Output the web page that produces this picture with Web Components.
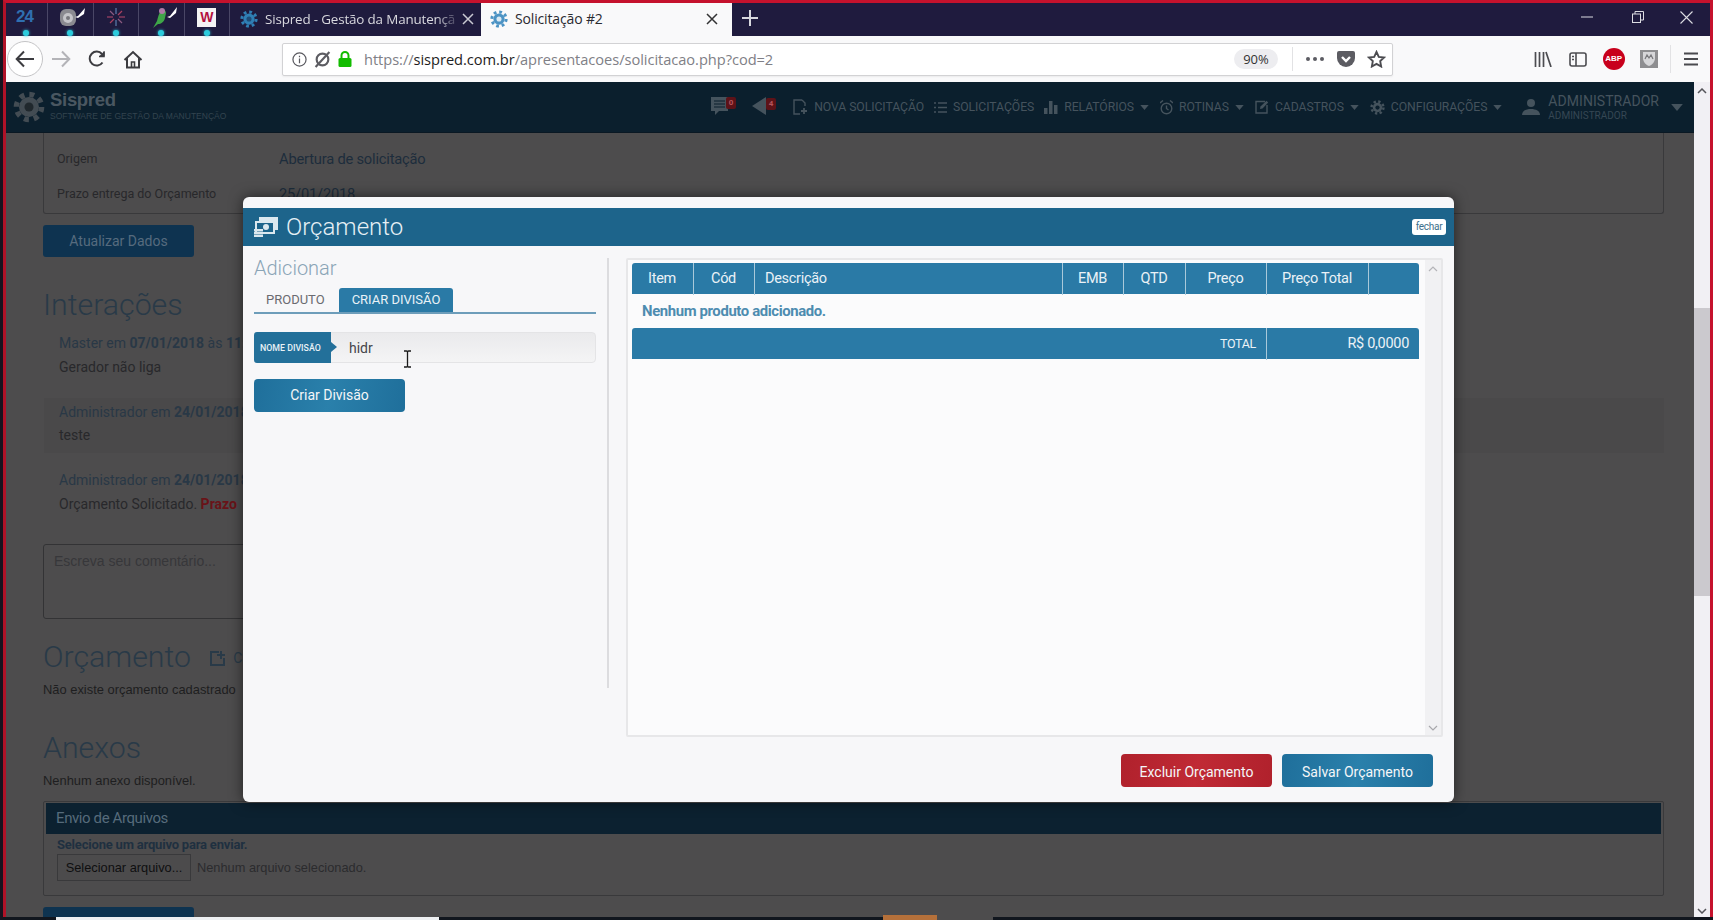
<!DOCTYPE html>
<html lang="pt-BR">
<head>
<meta charset="utf-8">
<title>Solicitação #2</title>
<style>
  html, body { margin: 0; height: 100%; overflow: hidden; background: #17131f; }
  body { font-family: Roboto, "Liberation Sans", sans-serif; }
</style>
</head>
<body>
<browser-window>
  <tab-bar></tab-bar>
  <tool-bar></tool-bar>
  <page-view>
    <app-header></app-header>
    <page-content></page-content>
  </page-view>
</browser-window>
<budget-modal></budget-modal>

<script>
// small svg helpers, the same gear is used in the tabs, the logo and the menu
function gear(size, color, hole) {
  return `<svg width="${size}" height="${size}" viewBox="0 0 24 24">
    <circle cx="12" cy="12" r="9.5" fill="none" stroke="${color}" stroke-width="4" stroke-dasharray="3.7 3.76"/>
    <circle cx="12" cy="12" r="7.5" fill="${color}"/>
    <circle cx="12" cy="12" r="3.4" fill="${hole}"/>
  </svg>`;
}
function caret(w, color) {
  return `<svg width="${w}" height="${Math.round(w * 0.6)}" viewBox="0 0 10 6"><path d="M0 0h10L5 6z" fill="${color}"/></svg>`;
}

class BrowserWindow extends HTMLElement {
  constructor() {
    super();
    this.attachShadow({ mode: 'open' });
    this.shadowRoot.innerHTML = `
      <style>
        :host { display: flex; flex-direction: column; box-sizing: border-box; width: 1713px; height: 920px; padding-left: 3px; }
        .frame { flex: 1; min-height: 0; display: flex; flex-direction: column; border-top: 3px solid #c5122d; border-left: 3px solid #b01228; border-right: 3px solid #c5122d; }
        .strip { height: 3px; display: flex; background: #11161e; }
        .strip i { display: block; height: 3px; }
        .white { margin-left: 53px; width: 383px; background: #eef0f2; }
        .orange { margin-left: 444px; width: 54px; background: #b5703a; height: 5px !important; margin-top: -2px; }
        .grey { width: 56px; background: #4d4c4d; }
      </style>
      <div class="frame"><slot></slot></div>
      <div class="strip"><i class="white"></i><i class="orange"></i><i class="grey"></i></div>`;
  }
}

class TabBar extends HTMLElement {
  constructor() {
    super();
    this.attachShadow({ mode: 'open' });
    this.shadowRoot.innerHTML = `
      <style>
        :host { display: flex; height: 33px; background: #1f1b3e; color: #d8d8de; font: 14px "Open Sans", "Liberation Sans", sans-serif; flex: none; }
        .pin { box-sizing: border-box; width: 45.5px; border-right: 1px solid #4a4766; display: flex; align-items: center; justify-content: center; position: relative; padding-bottom: 5px; }
        .pin.first { width: 42px; padding-right: 4px; }
        .pin::after { content: ""; position: absolute; bottom: 0; left: 50%; margin-left: -3px; width: 6px; height: 6px; border-radius: 50%; background: #2bcbdc; box-shadow: 0 0 3px #2bcbdc; }
        .pin.first::after { margin-left: -4px; }
        .n24 { font: bold 17px "Liberation Sans", sans-serif; color: #2f6fb0; letter-spacing: -1px; }
        .w { display: block; width: 19px; height: 19px; background: #f4f4f4; color: #b3123f; font: bold 14px/19px "Liberation Sans", sans-serif; text-align: center; }
        .tab { box-sizing: border-box; width: 251px; display: flex; align-items: center; padding: 0 13px 2px 10px; gap: 7px; white-space: nowrap; }
        .tab .t { flex: 1; font-size: 13.4px; letter-spacing: -.15px;
          -webkit-mask-image: linear-gradient(90deg, #000 90%, rgba(0,0,0,.25)); mask-image: linear-gradient(90deg, #000 90%, rgba(0,0,0,.25)); }
        .tab svg { flex: none; }
        .tab.on { background: #f9f9fa; color: #2a2a30; padding: 0 14px 2px 9px; }
        .tab.on .t { font-size: 14px; -webkit-mask-image: none; mask-image: none; }
        .plus { width: 36px; display: flex; align-items: center; justify-content: center; padding-bottom: 4px; }
        .win { margin-left: auto; display: flex; align-items: center; padding-bottom: 5px; }
        .win span { width: 51px; display: flex; justify-content: center; }
        .win span:last-child { width: 47px; }
      </style>
      <div class="pin first"><span class="n24">24</span></div>
      <div class="pin">
        <svg style="margin-left:5px" width="28" height="22" viewBox="0 0 28 22"><rect x="1" y="3" width="16" height="17" rx="6" fill="#8a8a90"/><circle cx="9" cy="12" r="5" fill="#c4c4c8"/><circle cx="9" cy="12" r="2" fill="#77777c"/><path d="M16 11l3-1 7-8-1 6-6 4z" fill="#fff"/></svg>
      </div>
      <div class="pin">
        <svg width="20" height="20" viewBox="0 0 20 20" stroke-width="1.2"><path d="M10 1v6M10 13v6" stroke="#5c7fae"/><path d="M1 10h6M13 10h6" stroke="#b94a6c"/><path d="M4 4l4 4M12 12l4 4" stroke="#8a5a80"/><path d="M16 4l-4 4M8 12l-4 4" stroke="#a9405f"/></svg>
      </div>
      <div class="pin">
        <svg style="margin-left:5px" width="28" height="24" viewBox="0 0 28 24"><path d="M3 23l4-7c1-4 2-8 4-10 2-2 5-1 5 2l-1 5c-1 4-4 6-7 6z" fill="#3fa648"/><circle cx="12" cy="6" r="3" fill="#b07aa8"/><path d="M17 12l3-1 7-9-1 6-6 5z" fill="#fff"/></svg>
      </div>
      <div class="pin"><span class="w">W</span></div>
      <div class="tab">${gear(18, '#2f7fb5', '#1f4d78')}<span class="t">Sispred - Gestão da Manutençã</span>
        <svg width="12" height="12" viewBox="0 0 12 12"><path d="M1 1l10 10M11 1L1 11" stroke="#c9c9d2" stroke-width="1.5"/></svg></div>
      <div class="tab on">${gear(18, '#4c93c4', '#d9e8f2')}<span class="t">Solicitação #2</span>
        <svg width="12" height="12" viewBox="0 0 12 12"><path d="M1 1l10 10M11 1L1 11" stroke="#333" stroke-width="1.5"/></svg></div>
      <div class="plus"><svg width="16" height="16" viewBox="0 0 16 16"><path d="M8 0v16M0 8h16" stroke="#d8d8de" stroke-width="2"/></svg></div>
      <div class="win">
        <span><svg width="12" height="2"><path d="M0 1h12" stroke="#dcdce2"/></svg></span>
        <span><svg width="12" height="12" viewBox="0 0 12 12" fill="none" stroke="#dcdce2"><rect x=".5" y="3" width="8" height="8.5"/><path d="M3 3V.5h8.5V9H9"/></svg></span>
        <span><svg width="13" height="13" viewBox="0 0 13 13"><path d="M.5.5l12 12M12.5.5l-12 12" stroke="#dcdce2" stroke-width="1.1"/></svg></span>
      </div>`;
  }
}

class ToolBar extends HTMLElement {
  constructor() {
    super();
    this.attachShadow({ mode: 'open' });
    this.shadowRoot.innerHTML = `
      <style>
        :host { display: flex; align-items: center; height: 46px; background: #f9f9fa; flex: none; box-sizing: border-box; font: 15px "Open Sans", "Liberation Sans", sans-serif; }
        .btn { width: 36px; height: 36px; display: flex; align-items: center; justify-content: center; flex: none; }
        .back { box-sizing: border-box; margin-left: 1px; border: 1px solid #c4c4c6; border-radius: 50%; background: #fff; }
        .url { box-sizing: border-box; margin-left: 131px; width: 1111px; height: 33px; background: #fff; border: 1px solid #d2d2d4; border-radius: 2px; display: flex; align-items: center; padding-left: 9px; box-shadow: 0 1px 2px rgba(0,0,0,.06); }
        .addr { margin-left: 12px; color: #808086; white-space: nowrap; font-size: 14.65px; letter-spacing: -.05px; }
        .addr b { font-weight: 400; color: #1d1d22; }
        .zoom { margin-left: auto; box-sizing: border-box; width: 44px; height: 20px; border-radius: 10px; background: #ededf0; color: #333; font-size: 13px; line-height: 20px; text-align: center; }
        .sep { width: 1px; height: 24px; background: #e2e2e4; margin: 0 6px 0 14px; }
        .ico { width: 31px; display: flex; justify-content: center; }
        .right { margin-left: 132px; display: flex; align-items: center; }
        .right .ico { width: 35.5px; }
        .abp { width: 22px; height: 22px; border-radius: 50%; background: #c8001c; color: #fff; font: bold 8px/22px "Liberation Sans", sans-serif; text-align: center; }
      </style>
      <div class="btn back"><svg width="20" height="18" viewBox="0 0 20 18" fill="none" stroke="#3c3c40" stroke-width="2"><path d="M19 9H2M9 1.5L1.7 9 9 16.5"/></svg></div>
      <div class="btn"><svg width="20" height="18" viewBox="0 0 20 18" fill="none" stroke="#b4b4b8" stroke-width="2"><path d="M1 9h17M11 1.5L18.3 9 11 16.5"/></svg></div>
      <div class="btn"><svg width="18" height="18" viewBox="0 0 18 18" fill="none" stroke="#3c3c40" stroke-width="2"><path d="M14.5 12.5A7 7 0 1 1 14 4"/><path d="M16.5 1v5h-5" stroke="none" fill="#3c3c40"/><path d="M16 1.5V6.5H11" stroke-width="1.6"/></svg></div>
      <div class="btn"><svg width="20" height="19" viewBox="0 0 20 19" fill="none" stroke="#3c3c40" stroke-width="2"><path d="M1.5 10L10 2l8.5 8M4 8v9.5h12V8"/><path d="M8.5 17.5V12h3v5.5" stroke-width="1.6"/></svg></div>
      <div class="url">
        <svg width="15" height="15" viewBox="0 0 16 16" fill="none" stroke="#5a5a60" stroke-width="1.3"><circle cx="8" cy="8" r="7"/><path d="M8 7v5M8 4v1.6"/></svg>
        <svg style="margin-left:7px" width="17" height="17" viewBox="0 0 16 16" fill="none" stroke="#5c5c62" stroke-width="2"><circle cx="8" cy="8" r="5.5"/><path d="M14.5 1L1.5 15" stroke-width="2"/></svg>
        <svg style="margin-left:7px" width="14" height="16" viewBox="0 0 14 16"><path d="M3.5 7V4.5a3.5 3.5 0 0 1 7 0V7" fill="none" stroke="#12bc00" stroke-width="2"/><rect x="0.5" y="7" width="13" height="9" rx="1.5" fill="#12bc00"/></svg>
        <span class="addr">https://<b>sispred.com.br</b>/apresentacoes/solicitacao.php?cod=2</span>
        <span class="zoom">90%</span>
        <span class="sep"></span>
        <span class="ico"><svg width="18" height="4" viewBox="0 0 18 4" fill="#5c5c62"><circle cx="2" cy="2" r="2"/><circle cx="9" cy="2" r="2"/><circle cx="16" cy="2" r="2"/></svg></span>
        <span class="ico"><svg width="18" height="16" viewBox="0 0 18 16"><path d="M2 0h14a2 2 0 0 1 2 2v5a9 9 0 0 1-18 0V2a2 2 0 0 1 2-2z" fill="#5c5c62"/><path d="M5 6l4 4 4-4" fill="none" stroke="#fff" stroke-width="2.4"/></svg></span>
        <span class="ico"><svg width="19" height="18" viewBox="0 0 20 19" fill="none" stroke="#4c4c50" stroke-width="2"><path d="M10 2l2.4 5.2 5.6.7-4.1 3.9 1 5.600-4.900-2.800-4.900 2.800 1-5.600L2 7.900l5.600-.7z"/></svg></span>
      </div>
      <div class="right">
        <span class="ico"><svg width="18" height="16" viewBox="0 0 18 16" fill="none" stroke="#4c4c50" stroke-width="1.7"><path d="M1.5 1v15M5.5 1v15M9.5 1v15M12 1l5 15"/></svg></span>
        <span class="ico"><svg width="18" height="15" viewBox="0 0 18 15" fill="none" stroke="#4c4c50" stroke-width="1.6"><rect x="1" y="1" width="16" height="13" rx="2"/><path d="M7 1v13"/><path d="M3 4.5h2M3 7.5h2" stroke-width="1.4"/></svg></span>
        <span class="ico"><span class="abp">ABP</span></span>
        <span class="ico"><svg width="18" height="18" viewBox="0 0 18 18"><rect width="18" height="18" fill="#8e8e90"/><path d="M3 2h12v6c0 4-3 7-6 8-3-1-6-4-6-8z" fill="#d6d6d8"/><path d="M5 9l2-4 2 3 2-3 2 4" fill="none" stroke="#77777a" stroke-width="1.2"/></svg></span>
        <span class="sep" style="margin:0 0 0 3px;height:28px"></span>
        <span class="ico" style="margin-left:3px"><svg width="16" height="14" viewBox="0 0 16 14"><path d="M0 1.5h14M0 7h14M0 12.5h14" stroke="#4a4a4e" stroke-width="2"/></svg></span>
      </div>`;
  }
}

class PageView extends HTMLElement {
  constructor() {
    super();
    this.attachShadow({ mode: 'open' });
    this.shadowRoot.innerHTML = `
      <style>
        :host { display: flex; flex: 1; min-height: 0; }
        .main { flex: 1; min-width: 0; overflow: hidden; background: #4d4c4d; display: flex; flex-direction: column; }
        .bar { width: 16px; flex: none; background: #f1f0f4; display: flex; flex-direction: column; align-items: center; justify-content: space-between; padding: 6px 0 3px; box-sizing: border-box; position: relative; }
        .thumb { position: absolute; left: 0; right: 0; top: 226px; height: 288px; background: #cbc9ce; }
      </style>
      <div class="main"><slot></slot></div>
      <div class="bar">
        <svg width="10" height="6" viewBox="0 0 10 6"><path d="M1 5l4-4 4 4" fill="none" stroke="#55555a" stroke-width="1.5"/></svg>
        <div class="thumb"></div>
        <svg width="10" height="6" viewBox="0 0 10 6"><path d="M1 1l4 4 4-4" fill="none" stroke="#55555a" stroke-width="1.5"/></svg>
      </div>`;
  }
}

class AppHeader extends HTMLElement {
  constructor() {
    super();
    this.attachShadow({ mode: 'open' });
    const c = '#45535d';
    const item = (icon, text, drop, gap) => `<span class="item" style="margin-left:${gap}px">${icon}<span>${text}</span>${drop ? caret(9, c) : ''}</span>`;
    this.shadowRoot.innerHTML = `
      <style>
        :host { display: flex; align-items: center; flex: none; height: 51px; box-sizing: border-box; background: #0b1f2d; border-bottom: 1px solid #0a1823; padding: 0 11px 0 7px; color: ${c}; font: 12.2px Roboto, sans-serif; }
        .logo { display: flex; align-items: center; gap: 5px; }
        .name { font: bold 18.5px/19px "Liberation Sans", sans-serif; color: #4a5761; letter-spacing: -.3px; margin-top: -3px; }
        .tag { font: 8.5px/10px "Liberation Sans", sans-serif; color: #33444f; margin-top: 2px; white-space: nowrap; }
        nav { margin-left: auto; display: flex; align-items: center; }
        .item { display: flex; align-items: center; gap: 6px; white-space: nowrap; letter-spacing: -.05px; }
        .badge { position: relative; display: block; }
        .n { position: absolute; right: -2px; top: 3px; width: 10px; height: 12px; background: #5d1218; border-radius: 2px; color: #b4545c; font: bold 8px/12px Roboto, sans-serif; font-style: normal; text-align: center; }
        .who { margin-left: 8px; line-height: 1; }
        .who b { display: block; font-weight: 400; font-size: 14px; letter-spacing: .05px; }
        .who small { display: block; font-size: 10px; margin-top: 3px; color: #364754; }
      </style>
      <div class="logo">
        ${gear(32, '#434c53', '#20282d')}
        <div><div class="name">Sispred</div><div class="tag">SOFTWARE DE GESTÃO DA MANUTENÇÃO</div></div>
      </div>
      <nav>
        <span class="badge"><svg width="24" height="24" viewBox="0 0 24 24"><path d="M1 3h17v14H9l-4 4v-4H1z" fill="${c}"/><path d="M4 7h11M4 10h11M4 13h11" stroke="#0b1f2d"/></svg><i class="n">0</i></span>
        <span class="badge" style="margin-left:18px"><svg width="24" height="22" viewBox="0 0 24 22"><path d="M0 11L14 2v18z" fill="${c}"/></svg><i class="n" style="right:0">4</i></span>
        ${item(`<svg width="15" height="16" viewBox="0 0 15 16" fill="none" stroke="${c}" stroke-width="1.4"><path d="M9 1H1v14h6"/><path d="M9 1l3 3v3"/><path d="M11 9v6M8 12h6" stroke-width="1.8"/></svg>`, 'NOVA SOLICITAÇÃO', false, 17)}
        ${item(`<svg width="13" height="13" viewBox="0 0 13 13" stroke="${c}" stroke-width="1.5"><path d="M0 2h2M4 2h9M0 6.5h2M4 6.5h9M0 11h2M4 11h9"/></svg>`, 'SOLICITAÇÕES', false, 10)}
        ${item(`<svg width="14" height="14" viewBox="0 0 14 14" fill="${c}"><rect y="8" width="3.5" height="6"/><rect x="5" y="1" width="3.5" height="13"/><rect x="10" y="5" width="3.5" height="9"/></svg>`, 'RELATÓRIOS', true, 10)}
        ${item(`<svg width="13" height="15" viewBox="0 0 13 15" fill="none" stroke="${c}" stroke-width="1.4"><circle cx="6.5" cy="8.5" r="5.3"/><path d="M6.5 5.5v3l2 1.5M0 3l3-2.5M13 3L10 .5"/></svg>`, 'ROTINAS', true, 11)}
        ${item(`<svg width="14" height="14" viewBox="0 0 14 14" fill="none" stroke="${c}" stroke-width="1.4"><path d="M10 1.5H1V13h11V5"/><path d="M5 9l.5-2.5L11.5.8l1.7 1.700-5.700 6z" fill="${c}" stroke="none"/></svg>`, 'CADASTROS', true, 11)}
        <span class="item" style="margin-left:11px">${gear(15, c, '#0b1f2d')}<span>CONFIGURAÇÕES</span>${caret(9, c)}</span>
        <svg style="margin-left:20px" width="18" height="18" viewBox="0 0 18 18" fill="${c}"><circle cx="9" cy="5" r="4"/><path d="M0 17c0-4 4-6 9-6s9 2 9 6z"/></svg>
        <span class="who"><b>ADMINISTRADOR</b><small>ADMINISTRADOR</small></span>
        <span style="margin-left:12px;display:flex">${caret(12, c)}</span>
      </nav>`;
  }
}

class PageContent extends HTMLElement {
  constructor() {
    super();
    this.attachShadow({ mode: 'open' });
    this.shadowRoot.innerHTML = `
      <style>
        :host { display: block; padding: 0 30px 0 37px; color: #28282b; font: 14px/23.5px Roboto, sans-serif; }
        .card { border: 1px solid #39393b; border-top: 0; border-radius: 0 0 3px 3px; padding: 8px 13px 1px; height: 71px; display: grid; grid-template-columns: 222px 1fr; grid-auto-rows: 35px; align-items: center; font-size: 12.5px; }
        .val { font-size: 14.7px; color: #1d2d3c; letter-spacing: -.2px; padding-top: 2px; }
        .btn { display: block; width: 151px; height: 32px; border-radius: 3px; background: #0e3350; color: #566b7e; font-size: 14px; line-height: 32px; text-align: center; }
        h2 { font-weight: 300; font-size: 30.3px; line-height: 36px; margin: 0; color: #293a48; }
        .msg { height: 55px; box-sizing: border-box; padding: 3px 15px; margin-left: 1px; }
        .msg + .msg { margin-top: 13.5px; }
        .msg.alt { background: #4a494a; }
        .msg .who { color: #293846; }
        .msg b.red { color: #691318; }
        .comment { margin-top: 23px; width: 300px; height: 75px; box-sizing: border-box; border: 1px solid #333335; border-radius: 3px; padding: 4px 10px; font: 14px/24px "Liberation Sans", sans-serif; color: #37373a; }
        .row { font: 12.9px/20px "Liberation Sans", sans-serif; color: #1e1e20; }
        .crt { display: inline-flex; align-items: center; gap: 7px; font: 14px Roboto, sans-serif; margin-left: 12px; color: #293a48; vertical-align: 1px; }
        .box { margin-top: 10px; box-sizing: border-box; height: 95px; border: 1px solid #39393b; padding: 1px 2px; border-radius: 2px; }
        .box header { height: 31px; background: #0c2130; color: #566b7b; font: 15px/31px Roboto, sans-serif; padding-left: 10px; letter-spacing: -.4px; }
        .pick { font-weight: 700; font-size: 13px; line-height: 19px; color: #1f3040; padding-left: 11px; letter-spacing: -.2px; margin-top: 1px; }
        .file { display: flex; align-items: center; gap: 6px; padding-left: 11px; font: 12.8px/26px "Liberation Sans", sans-serif; color: #2b2b2e; }
        .file span { box-sizing: border-box; width: 134px; height: 27px; background: #4c4b4c; border: 1px solid #39393b; text-align: center; color: #0f0f10; }
      </style>
      <div class="card">
        <span>Origem</span><span class="val">Abertura de solicitação</span>
        <span>Prazo entrega do Orçamento</span><span class="val">25/01/2018</span>
      </div>
      <span class="btn" style="margin-top:11px">Atualizar Dados</span>
      <h2 style="margin-top:30px">Interações</h2>
      <div style="margin-top:6px">
        <div class="msg"><span class="who">Master em <b>07/01/2018</b> às <b>11:02</b></span><br>Gerador não liga</div>
        <div class="msg alt"><span class="who">Administrador em <b>24/01/2018</b></span><br>teste</div>
        <div class="msg"><span class="who">Administrador em <b>24/01/2018</b></span><br>Orçamento Solicitado. <b class="red">Prazo</b></div>
      </div>
      <div class="comment">Escreva seu comentário...</div>
      <h2 style="margin-top:20px">Orçamento
        <span class="crt"><svg width="16" height="16" viewBox="0 0 16 16" fill="none" stroke="#293a48" stroke-width="2"><path d="M9 2H1v13h13V8"/><path d="M11 1v8M7 5h8"/></svg>Criar</span>
      </h2>
      <div class="row" style="margin-top:5px">Não existe orçamento cadastrado</div>
      <h2 style="margin-top:30px">Anexos</h2>
      <div class="row" style="margin-top:5px">Nenhum anexo disponível.</div>
      <div class="box">
        <header>Envio de Arquivos</header>
        <div class="pick">Selecione um arquivo para enviar.</div>
        <div class="file"><span>Selecionar arquivo...</span>Nenhum arquivo selecionado.</div>
      </div>
      <span class="btn" style="margin-top:11px"></span>`;
  }
}

class ActionButton extends HTMLElement {
  constructor() {
    super();
    this.attachShadow({ mode: 'open' });
    this.shadowRoot.innerHTML = `
      <style>
        :host { display: block; width: 151px; height: 33px; border-radius: 4px; color: #f4f6f8; font: 14px/var(--lh, 33px) Roboto, sans-serif; text-align: center;
          background: linear-gradient(100deg, var(--a, #1f6f9b), var(--b, #2a80ab) 50%, var(--a, #1f6f9b)); }
      </style>
      <slot></slot>`;
  }
}

class AddPane extends HTMLElement {
  constructor() {
    super();
    this.attachShadow({ mode: 'open' });
    this.shadowRoot.innerHTML = `
      <style>
        :host { display: block; position: relative; box-sizing: border-box; width: 342px; flex: none; }
        h3 { margin: 10px 0 0; font: 300 20px/24px Roboto, sans-serif; color: #8aa4b6; }
        .tabs { display: flex; margin-top: 8px; height: 24px; border-bottom: 2px solid #6d9dba; font: 13px/24px Roboto, sans-serif; }
        .tabs span { padding: 0 12px; color: #6a6a70; }
        .tabs .on { background: #2a7aa6; color: #e9f2f7; border-radius: 3px 3px 0 0; margin-left: 2px; padding: 0 13px; width: 88px; text-align: center; white-space: nowrap; }
        .field { margin-top: 18px; height: 31px; display: flex; background: linear-gradient(#eaeaec, #f4f4f5); border: 1px solid #e4e4e6; border-radius: 4px; box-sizing: border-box; }
        .field label { position: relative; width: 77px; flex: none; margin: -1px 0 -1px -1px; background: #23709a; color: #e8f1f6; font: 500 8.8px/33px Roboto, sans-serif; padding-left: 6px; box-sizing: border-box; border-radius: 3px 0 0 3px; white-space: nowrap; }
        .field label::after { content: ""; position: absolute; right: -6px; top: 10px; border-left: 6px solid #23709a; border-top: 5.5px solid transparent; border-bottom: 5.5px solid transparent; }
        .field span { margin-left: 18px; font: 14px/31px Roboto, sans-serif; color: #45454a; }
        action-button { margin-top: 16px; }
        .cursor { position: absolute; left: 149px; top: 104px; }
      </style>
      <h3>Adicionar</h3>
      <div class="tabs"><span>PRODUTO</span><span class="on">CRIAR DIVISÃO</span></div>
      <div class="field"><label>NOME DIVISÃO</label><span>hidr</span></div>
      <action-button>Criar Divisão</action-button>
      <svg class="cursor" width="9" height="18" viewBox="0 0 9 18" fill="none" stroke="#1a1a1a" stroke-width="1.3"><path d="M1 1h2.500c.5 0 1 .5 1 1v14c0 .5-.5 1-1 1H1M8 1H5.500c-.5 0-1 .5-1 1M8 17H5.500c-.5 0-1-.5-1-1"/></svg>`;
  }
}

class BudgetTable extends HTMLElement {
  constructor() {
    super();
    this.attachShadow({ mode: 'open' });
    this.shadowRoot.innerHTML = `
      <style>
        :host { flex: 1; min-width: 0; display: flex; box-sizing: border-box; height: 479px; border: 2px solid #e7e7e9; border-radius: 2px; background: #fbfbfc; padding: 3px 0 0 4px; }
        .tbl { width: 787px; flex: none; color: #eaf2f7; font: 14.5px/32px Roboto, sans-serif; letter-spacing: -.3px; }
        .head, .total { display: grid; height: 31px; background: #2a7aa6; border-radius: 3px 3px 0 0; }
        .head { grid-template-columns: 62px 61px 308px 61px 62px 81px 102px 50px; }
        .head span { border-right: 1px solid #a9c9da; text-align: center; padding-right: 1px; box-sizing: border-box; }
        .head span:last-child { border: 0; }
        .head .left { text-align: left; padding-left: 10px; }
        .none { height: 34px; font-weight: 700; line-height: 35px; padding-left: 10px; color: #4d8cb0; font-size: 14.9px; letter-spacing: -.38px; }
        .total { grid-template-columns: 635px 152px; }
        .total span { text-align: right; padding-right: 10px; }
        .total span:first-child { border-right: 1px solid #a9c9da; font-size: 12.5px; }
        .sb { margin-left: 6px; width: 16px; margin-top: -3px; background: #f1f1f3; display: flex; flex-direction: column; justify-content: space-between; align-items: center; padding: 6px 0 4px; box-sizing: border-box; }
      </style>
      <div class="tbl">
        <div class="head"><span>Item</span><span>Cód</span><span class="left">Descrição</span><span>EMB</span><span>QTD</span><span>Preço</span><span>Preço Total</span><span></span></div>
        <div class="none">Nenhum produto adicionado.</div>
        <div class="total"><span>TOTAL</span><span>R$ 0,0000</span></div>
      </div>
      <div class="sb">
        <svg width="10" height="6" viewBox="0 0 10 6"><path d="M1 5l4-4 4 4" fill="none" stroke="#b4b4b8" stroke-width="1.2"/></svg>
        <svg width="10" height="6" viewBox="0 0 10 6"><path d="M1 1l4 4 4-4" fill="none" stroke="#a8a8ac" stroke-width="1.2"/></svg>
      </div>`;
  }
}

class BudgetModal extends HTMLElement {
  constructor() {
    super();
    this.attachShadow({ mode: 'open' });
    this.shadowRoot.innerHTML = `
      <style>
        :host { position: absolute; left: 243px; top: 197px; width: 1211px; height: 605px; display: flex; flex-direction: column; background: #f7f7f9; border-radius: 6px; box-shadow: 0 0 14px rgba(0,0,0,.55); padding-top: 11px; box-sizing: border-box; }
        header { height: 38px; flex: none; background: #1d648b; display: flex; align-items: center; color: #e6f0f5; font: 300 24px Roboto, sans-serif; padding: 0 8px 0 11px; gap: 8px; }
        .close { margin-left: auto; width: 34px; height: 16px; background: #fff; border-radius: 3px; color: #3d6f8b; font: 10px/16px Roboto, sans-serif; text-align: center; letter-spacing: -.3px; }
        .body { display: flex; align-items: flex-start; padding: 0 11px; }
        .rule { width: 2px; height: 430px; margin: 12px 17px 0 11px; background: #dcdcdf; flex: none; }
        budget-table { margin-top: 12px; }
        footer { display: flex; justify-content: flex-end; gap: 10px; padding: 17px 21px 0 0; --lh: 36px; }
      </style>
      <header>
        <svg width="24" height="20" viewBox="0 0 24 20"><path d="M5 0h19v13h-4V4H5z" fill="#dbe8ef"/><rect x="2" y="5" width="18" height="11" fill="none" stroke="#dbe8ef" stroke-width="2"/><circle cx="12" cy="10" r="3" fill="#dbe8ef"/><path d="M0 12h9v2.500H0zM0 15h9v2.200H0zM0 17.800h9V20H0z" fill="#dbe8ef"/></svg>
        <span>Orçamento</span>
        <span class="close">fechar</span>
      </header>
      <div class="body">
        <add-pane></add-pane>
        <div class="rule"></div>
        <budget-table></budget-table>
      </div>
      <footer>
        <action-button style="--a:#b0212c;--b:#c02a35">Excluir Orçamento</action-button>
        <action-button>Salvar Orçamento</action-button>
      </footer>`;
  }
}

customElements.define('action-button', ActionButton);
customElements.define('browser-window', BrowserWindow);
customElements.define('tab-bar', TabBar);
customElements.define('tool-bar', ToolBar);
customElements.define('page-view', PageView);
customElements.define('app-header', AppHeader);
customElements.define('page-content', PageContent);
customElements.define('add-pane', AddPane);
customElements.define('budget-table', BudgetTable);
customElements.define('budget-modal', BudgetModal);
</script>
</body>
</html>
